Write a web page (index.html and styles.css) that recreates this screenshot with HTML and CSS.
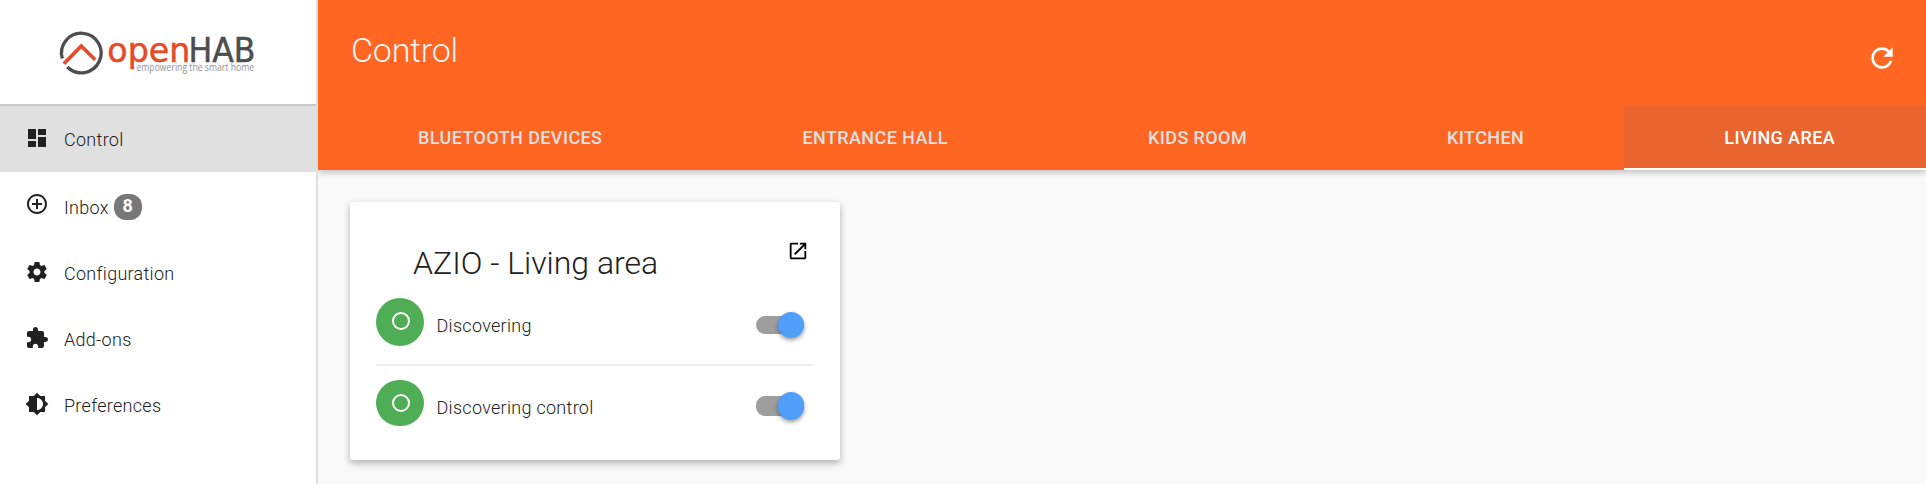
FILE: index.html
```html
<!DOCTYPE html>
<html lang="en">
<head>
<meta charset="utf-8">
<title>openHAB</title>
<link rel="stylesheet" href="styles.css">
</head>
<body>
<div class="app">
  <aside class="sidebar">
    <div class="brand">
      <svg class="logo" width="200" height="50" viewBox="0 0 200 50" role="img" aria-label="openHAB">
        <path d="M3.300 28.500A19.800 19.800 0 1 1 8.300 37" fill="none" stroke="#4d4d4d" stroke-width="3.300"/>
        <path d="M4.800 33.800L22.300 16L36.200 29.800" fill="none" stroke="#e64a26" stroke-width="3.600"/>
        <text class="logo-name logo-open" x="48.300" y="31.500" textLength="83" lengthAdjust="spacingAndGlyphs">open</text>
        <text class="logo-name logo-hab" x="129.500" y="31.500" textLength="67" lengthAdjust="spacingAndGlyphs">HAB</text>
        <text class="logo-tag" x="77.500" y="40.500" textLength="117.500" lengthAdjust="spacingAndGlyphs">empowering the smart home</text>
      </svg>
    </div>
    <nav class="menu">
      <a class="menu-item active">
        <svg class="icon" viewBox="0 0 24 24"><path d="M3 13h8V3H3v10zm0 8h8v-6H3v6zm10 0h8V11h-8v10zm0-18v6h8V3h-8z"/></svg>
        <span>Control</span>
      </a>
      <a class="menu-item inbox">
        <svg class="icon" viewBox="0 0 24 24"><path d="M13 7h-2v4H7v2h4v4h2v-4h4v-2h-4V7zm-1-5C6.480 2 2 6.480 2 12s4.480 10 10 10 10-4.480 10-10S17.520 2 12 2zm0 18c-4.410 0-8-3.590-8-8s3.590-8 8-8 8 3.590 8 8-3.590 8-8 8z"/></svg>
        <span>Inbox</span><span class="badge">8</span>
      </a>
      <a class="menu-item">
        <svg class="icon" viewBox="0 0 24 24"><path d="M19.430 12.980c.04-.32.07-.64.07-.98s-.03-.66-.07-.98l2.110-1.650c.19-.15.24-.42.12-.64l-2-3.460c-.12-.22-.39-.3-.61-.22l-2.490 1c-.52-.4-1.080-.73-1.690-.98l-.38-2.650C14.460 2.180 14.250 2 14 2h-4c-.25 0-.46.18-.49.42l-.38 2.650c-.61.25-1.170.59-1.690.98l-2.490-1c-.23-.09-.49 0-.61.22l-2 3.460c-.13.22-.07.49.12.64l2.110 1.650c-.04.32-.07.65-.07.98s.03.66.07.98l-2.110 1.650c-.19.15-.24.42-.12.64l2 3.460c.12.22.39.3.61.22l2.490-1c.52.4 1.080.73 1.690.98l.38 2.650c.03.24.24.42.49.42h4c.25 0 .46-.18.49-.42l.38-2.650c.61-.25 1.170-.59 1.690-.98l2.490 1c.23.09.49 0 .61-.22l2-3.460c.12-.22.07-.49-.12-.64l-2.110-1.650zM12 15.500c-1.930 0-3.500-1.570-3.500-3.500s1.570-3.500 3.500-3.500 3.500 1.570 3.500 3.500-1.570 3.500-3.500 3.500z"/></svg>
        <span>Configuration</span>
      </a>
      <a class="menu-item">
        <svg class="icon" viewBox="0 0 24 24"><path d="M20.500 11H19V7c0-1.100-.9-2-2-2h-4V3.500C13 2.120 11.880 1 10.500 1S8 2.120 8 3.500V5H4c-1.100 0-1.990.9-1.990 2v3.800H3.500c1.490 0 2.700 1.210 2.700 2.700s-1.210 2.700-2.700 2.700H2V20c0 1.100.9 2 2 2h3.800v-1.500c0-1.490 1.210-2.700 2.700-2.700 1.490 0 2.700 1.210 2.700 2.700V22H17c1.100 0 2-.9 2-2v-4h1.500c1.380 0 2.500-1.120 2.500-2.500S21.880 11 20.500 11z"/></svg>
        <span>Add-ons</span>
      </a>
      <a class="menu-item">
        <svg class="icon" viewBox="0 0 24 24"><path d="M20 15.310L23.310 12 20 8.690V4h-4.690L12 .690 8.690 4H4v4.690L.690 12 4 15.310V20h4.690L12 23.310 15.310 20H20v-4.690zM12 18V6c3.310 0 6 2.690 6 6s-2.690 6-6 6z"/></svg>
        <span>Preferences</span>
      </a>
    </nav>
  </aside>
  <div class="main">
    <header class="header">
      <div class="title-bar">
        <h1 class="page-title">Control</h1>
        <svg class="refresh" viewBox="0 0 24 24"><path d="M17.650 6.350C16.200 4.900 14.210 4 12 4c-4.420 0-7.990 3.580-7.990 8s3.570 8 7.990 8c3.730 0 6.840-2.550 7.730-6h-2.080c-.82 2.330-3.040 4-5.650 4-3.310 0-6-2.690-6-6s2.690-6 6-6c1.660 0 3.140.69 4.220 1.780L13 11h7V4l-2.350 2.350z"/></svg>
      </div>
      <nav class="tabs">
        <a class="tab">BLUETOOTH DEVICES</a>
        <a class="tab">ENTRANCE HALL</a>
        <a class="tab">KIDS ROOM</a>
        <a class="tab">KITCHEN</a>
        <a class="tab active">LIVING AREA</a>
      </nav>
    </header>
    <main class="content">
      <section class="card">
        <div class="card-head">
          <h2 class="card-title">AZIO - Living area</h2>
          <svg class="open-icon" viewBox="0 0 24 24"><path d="M19 19H5V5h7V3H5c-1.110 0-2 .9-2 2v14c0 1.100.89 2 2 2h14c1.100 0 2-.9 2-2v-7h-2v7zM14 3v2h3.590l-9.830 9.830 1.410 1.410L19 6.410V10h2V3h-7z"/></svg>
        </div>
        <div class="channel">
          <span class="dot"><span class="ring"></span></span>
          <span class="channel-name">Discovering</span>
          <span class="switch"><span class="thumb"></span></span>
        </div>
        <div class="channel second">
          <span class="dot"><span class="ring"></span></span>
          <span class="channel-name">Discovering control</span>
          <span class="switch"><span class="thumb"></span></span>
        </div>
      </section>
    </main>
  </div>
</div>
</body>
</html>
```
FILE: styles.css
```css
* {
  box-sizing: border-box;
}

body {
  margin: 0;
  font-family: Roboto, sans-serif;
  font-weight: 300;
  font-size: 18px;
  letter-spacing: 0.290px;
  color: #212121;
}

.app {
  display: flex;
  height: 484px;
  overflow: hidden;
}

.sidebar {
  position: relative;
  z-index: 1;
  flex: none;
  width: 318px;
  border-right: 2px solid #dedede;
  background: #fff;
}

.brand {
  height: 106px;
  padding: 30px 0 0 59px;
  border-bottom: 2px solid #c9c9c9;
}

.logo {
  display: block;
  overflow: visible;
  letter-spacing: 0;
}

.logo-name {
  font-family: "DejaVu Sans", sans-serif;
  font-size: 33.500px;
  font-weight: 400;
  stroke-width: 0.500;
}

.logo-open {
  fill: #e64a26;
  stroke: #e64a26;
}

.logo-hab {
  fill: #4d4d4d;
  stroke: #4d4d4d;
}

.logo-tag {
  font-family: "Open Sans", sans-serif;
  font-size: 10.500px;
  font-weight: 400;
  fill: #949494;
}

.menu-item {
  display: flex;
  height: 66px;
  padding: 22px 0 0 25px;
  line-height: 24px;
}

.menu-item.active {
  background: #e0e0e0;
}

.menu-item.inbox {
  height: 68px;
  padding-top: 24px;
}

.icon {
  flex: none;
  width: 24px;
  height: 24px;
  margin: -2px 15px 0 0;
  fill: #212121;
}

.inbox .icon {
  margin-top: -4px;
}

.badge {
  width: 28px;
  height: 26px;
  margin: -2px 0 0 5px;
  border-radius: 12px;
  background: #777;
  color: #fff;
  font-weight: 700;
  line-height: 24px;
  text-align: center;
}

.main {
  flex: 1;
  display: flex;
  flex-direction: column;
  background: #f9f9f9;
}

.header {
  height: 170px;
  background: #ff6622;
  box-shadow: 0 2px 7px rgba(0, 0, 0, 0.26);
}

.title-bar {
  display: flex;
  justify-content: space-between;
  height: 106px;
  padding: 30px 28px 0 33px;
}

.page-title {
  margin: 0;
  font-size: 34px;
  font-weight: 300;
  line-height: 40px;
  letter-spacing: -0.25px;
  color: #f5f5f5;
}

.refresh {
  width: 32px;
  height: 32px;
  margin-top: 12px;
  fill: #fff;
}

.tabs {
  display: flex;
  height: 64px;
}

.tab {
  flex: 0 0 auto;
  padding: 20px 100px 0;
  font-weight: 500;
  line-height: 24px;
  letter-spacing: 0.4px;
  text-align: center;
  white-space: nowrap;
  color: #e0e0e0;
}

.tab.active {
  flex: none;
  width: 302px;
  margin-left: auto;
  padding: 20px 0 0 100px;
  background: #e8652f;
  border-bottom: 2px solid #fff;
  text-align: left;
  color: #fff;
}

.content {
  padding: 32px;
}

.card {
  width: 490px;
  height: 258px;
  padding: 36px 26px 0;
  border-radius: 3px;
  background: #fff;
  box-shadow: 0 3px 7px rgba(0, 0, 0, 0.3);
}

.card-head {
  display: flex;
  justify-content: space-between;
  height: 60px;
  padding: 0 5px 0 37px;
}

.card-title {
  margin: 5px 0 0;
  font-size: 32px;
  font-weight: 300;
  line-height: 40px;
  letter-spacing: 0;
}

.open-icon {
  width: 22px;
  height: 22px;
  margin-top: 2px;
  fill: #000;
}

.channel {
  display: flex;
  height: 68px;
  border-bottom: 2px solid #eee;
}

.channel.second {
  height: 60px;
  padding-top: 14px;
  border-bottom: 0;
}

.dot {
  display: flex;
  align-items: center;
  justify-content: center;
  width: 48px;
  height: 48px;
  padding: 0 0 2px 1px;
  border-radius: 24px;
  background: #4fad55;
}

.second .dot {
  height: 46px;
  padding-bottom: 0;
}

.ring {
  width: 18px;
  height: 18px;
  border: 2px solid #fff;
  border-radius: 50%;
}

.channel-name {
  flex: 1;
  margin: 16px 0 0 12.500px;
  line-height: 24px;
}

.switch {
  display: flex;
  justify-content: flex-end;
  align-items: center;
  width: 48px;
  height: 18px;
  margin: 18px 10px 0 0;
  border-radius: 9px;
  background: #9e9e9e;
}

.thumb {
  flex: none;
  width: 26px;
  height: 26px;
  border-radius: 13px;
  background: #4f9ff8;
  box-shadow: 0 2px 4px rgba(0, 0, 0, 0.4);
}

.second .switch {
  height: 20px;
  margin-top: 16px;
}

.second .thumb {
  height: 28px;
}
```
